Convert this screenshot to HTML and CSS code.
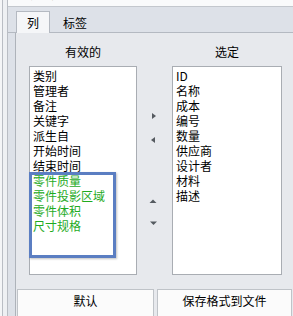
FILE: index.html
```html
<!DOCTYPE html>
<html lang="zh-CN">
<head>
    <meta charset="UTF-8">
    <title>列设置</title>
    <link rel="stylesheet" href="styles.css">
</head>
<body>
    <div class="window">
        <div class="frame">
            <div class="main">
                <div class="titlebar"><span class="title">列设置</span></div>
                <div class="tabs">
                    <div class="tab active">列</div>
                    <div class="tab">标签</div>
                </div>
                <div class="panel">
                    <div class="lists">
                        <div class="col col-left">
                            <div class="col-label">有效的</div>
                            <div class="listbox">
                                <div class="item">类别</div>
                                <div class="item">管理者</div>
                                <div class="item">备注</div>
                                <div class="item">关键字</div>
                                <div class="item">派生自</div>
                                <div class="item">开始时间</div>
                                <div class="item">结束时间</div>
                                <div class="item green">零件质量</div>
                                <div class="item green">零件投影区域</div>
                                <div class="item green">零件体积</div>
                                <div class="item green">尺寸规格</div>
                                <div class="highlight"></div>
                            </div>
                        </div>
                        <div class="movers">
                            <svg class="arrow" width="35" height="8" viewBox="0 0 35 8"><polygon points="15,1 19,4 15,7"/></svg>
                            <svg class="arrow arrow-left" width="35" height="8" viewBox="0 0 35 8"><polygon points="18,1 14,4 18,7"/></svg>
                            <svg class="arrow arrow-up" width="35" height="8" viewBox="0 0 35 8"><polygon points="12.5,6 16,2.5 19.5,6"/></svg>
                            <svg class="arrow arrow-down" width="35" height="8" viewBox="0 0 35 8"><polygon points="13,2.5 20,2.5 16.5,6"/></svg>
                        </div>
                        <div class="col col-right">
                            <div class="col-label">选定</div>
                            <div class="listbox">
                                <div class="item">ID</div>
                                <div class="item">名称</div>
                                <div class="item">成本</div>
                                <div class="item">编号</div>
                                <div class="item">数量</div>
                                <div class="item">供应商</div>
                                <div class="item">设计者</div>
                                <div class="item">材料</div>
                                <div class="item">描述</div>
                            </div>
                        </div>
                    </div>
                    <div class="buttons">
                        <div class="btn btn-default">默认</div>
                        <div class="btn btn-save">保存格式到文件</div>
                    </div>
                </div>
            </div>
        </div>
    </div>
</body>
</html>
```

FILE: styles.css
```css
body {
    margin: 0;
    padding: 0;
    font-family: "Noto Sans CJK SC", "Liberation Sans", sans-serif;
    font-size: 12px;
    color: #000;
    background-color: #f4f5f7;
    overflow: hidden;
}

.window {
    height: 316px;
    overflow: hidden;
    padding-left: 2px;
}

.frame {
    height: 100%;
    border-left: 1px solid #b9bdc4;
    padding-left: 4px;
    background-color: #eef0f3;
}

.main {
    height: 100%;
    border-left: 1px solid #b9bdc4;
    background-color: #dde1e8;
}

.titlebar {
    height: 6px;
    overflow: hidden;
    background-color: #f9fafb;
    border-bottom: 1px solid #c3c7cd;
}

.title {
    display: block;
    margin: -14px 0 0 22px;
    line-height: 15px;
    font-weight: bold;
    color: #222;
}

/* 标签页 */
.tabs {
    height: 25px;
    display: flex;
    align-items: flex-end;
    padding-left: 8px;
    border-bottom: 1px solid #b4b9c1;
}

.tab {
    line-height: 21px;
    padding: 0 10px;
    margin-bottom: -1px;
    border: 1px solid transparent;
    border-bottom: none;
}

.tab.active {
    background-color: #f5f6f8;
    border-color: #b4b9c1;
}

.tab + .tab {
    padding-left: 12px;
}

.panel {
    height: 100%;
    margin-left: 7px;
    border-left: 1px solid #aeb3ba;
    background-color: #e7e9ed;
}

.lists {
    display: flex;
    padding: 11px 0 0 13px;
}

.col-left {
    width: 108px;
}

.col-right {
    width: 110px;
}

.col-label {
    text-align: center;
    line-height: 16px;
    margin-bottom: 6px;
}

.listbox {
    position: relative;
    height: 209px;
    box-sizing: border-box;
    padding: 1px 0 0 3px;
    background-color: #fff;
    border: 1px solid #a9adb3;
}

.item {
    line-height: 15px;
    white-space: nowrap;
}

.item.green {
    color: #1fab1f;
}

/* 蓝色标注框 */
.highlight {
    position: absolute;
    left: -1px;
    top: 105px;
    width: 87px;
    height: 86px;
    box-sizing: border-box;
    border: 3px solid #5b7ec2;
    box-shadow: 1px 1px 2px rgba(0, 0, 0, 0.25);
}

.movers {
    width: 35px;
    display: flex;
    flex-direction: column;
    padding-top: 68px;
}

.arrow {
    display: block;
    fill: #555a60;
}

.arrow-left {
    margin-top: 16px;
}

.arrow-up {
    margin-top: 53px;
}

.arrow-down {
    margin-top: 14px;
}

.buttons {
    display: flex;
    gap: 3px;
    padding-left: 1px;
    margin-top: 14px;
}

.btn {
    height: 30px;
    box-sizing: border-box;
    border: 1px solid #bfc3c8;
    background-color: #fbfbfb;
    text-align: center;
    line-height: 22px;
}

.btn-default {
    width: 137px;
}

.btn-save {
    width: 135px;
}
```
